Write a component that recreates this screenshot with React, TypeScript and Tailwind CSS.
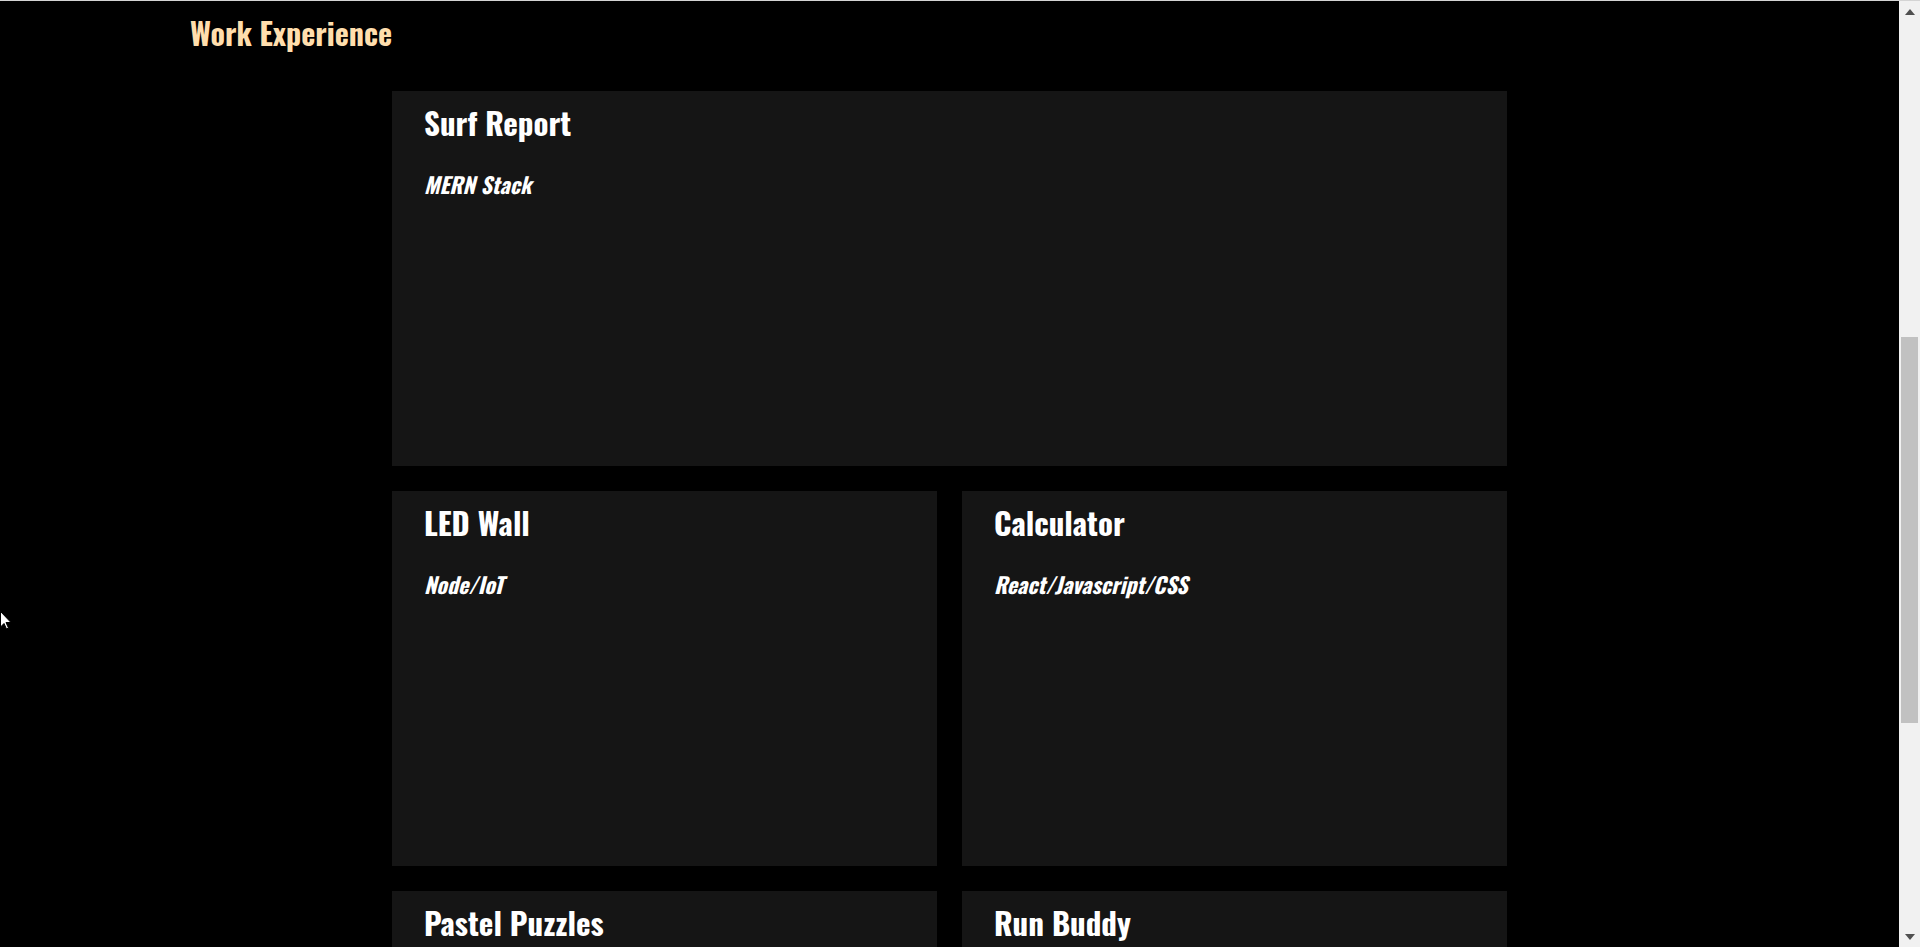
const projects = [
  { title: "LED Wall", stack: "Node/IoT" },
  { title: "Calculator", stack: "React/Javascript/CSS" },
  { title: "Pastel Puzzles", stack: "HTML/CSS/Javascript" },
  { title: "Run Buddy", stack: "HTML/CSS" },
];

const font = "font-['Oswald','Liberation_Sans_Narrow','DejaVu_Sans_Condensed',sans-serif] [font-stretch:condensed]";

function ProjectCard({ title, stack }: { title: string; stack: string }) {
  return (
    <div className="h-[375px] bg-[#151515] px-8 pt-[11px]">
      <h3 className={`${font} text-[31px] leading-[40px] font-bold text-white`}>{title}</h3>
      <h4 className={`${font} mt-[28px] text-[22px] leading-[28px] font-bold italic text-white`}>{stack}</h4>
    </div>
  );
}

function Scrollbar() {
  return (
    <div className="flex w-[21px] flex-col items-center bg-[#f1f1f1]">
      <div className="flex h-[21px] w-full items-center justify-center">
        <svg width="10" height="6" viewBox="0 0 10 6">
          <path d="M5 0 L10 6 L0 6 Z" fill="#505050" />
        </svg>
      </div>
      <div className="flex w-full flex-1 flex-col px-[2px]">
        <div className="h-[315px]" />
        <div className="h-[386px] bg-[#c1c1c1]" />
      </div>
      <div className="flex h-[21px] w-full items-center justify-center">
        <svg width="10" height="6" viewBox="0 0 10 6">
          <path d="M0 0 L10 0 L5 6 Z" fill="#505050" />
        </svg>
      </div>
    </div>
  );
}

export default function App() {
  return (
    <div className="relative flex h-[947px] w-full flex-col overflow-hidden bg-black">
      <div className="h-px w-full bg-[#d4d4d4]" />
      <div className="flex min-h-0 flex-1">
        <main className="min-w-0 flex-1 overflow-hidden bg-black">
          <h2 className={`${font} ml-[190px] mt-[12px] text-[30px] leading-[40px] font-bold text-[#ffdead]`}>
            Work Experience
          </h2>
          <div className="mx-auto mt-[38px] flex w-[1115px] flex-col gap-[25px]">
            <ProjectCard title="Surf Report" stack="MERN Stack" />
            <div className="grid grid-cols-2 gap-[25px]">
              {projects.map((p) => (
                <ProjectCard key={p.title} title={p.title} stack={p.stack} />
              ))}
            </div>
          </div>
        </main>
        <Scrollbar />
      </div>
      <svg className="absolute left-0 top-[611px]" width="12" height="19" viewBox="0 0 12 19">
        <path d="M0.5 0.5 L0.5 16 L4 12.5 L6.5 18 L8.5 17 L6 11.5 L11 11.5 Z" fill="#fff" stroke="#000" strokeWidth="1" />
      </svg>
    </div>
  );
}
